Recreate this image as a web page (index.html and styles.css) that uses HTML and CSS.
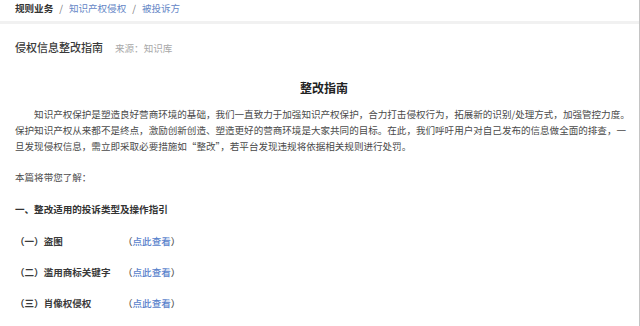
FILE: index.html
```html
<!DOCTYPE html>
<html lang="zh-CN">
<head>
<meta charset="utf-8">
<title>侵权信息整改指南</title>
<link rel="stylesheet" href="styles.css">
</head>
<body>
<div class="page">
  <nav class="crumbs">
    <span class="crumb-root">规则业务</span>
    <span class="crumb-sep">/</span>
    <a class="crumb-link">知识产权侵权</a>
    <span class="crumb-sep">/</span>
    <a class="crumb-link">被投诉方</a>
  </nav>
  <header class="doc-head">
    <h1 class="doc-title">侵权信息整改指南</h1>
    <span class="doc-source">来源：知识库</span>
  </header>
  <article class="article">
    <h2 class="article-title">整改指南</h2>
    <p class="intro">知识产权保护是塑造良好营商环境的基础，我们一直致力于加强知识产权保护，合力打击侵权行为，拓展新的识别/处理方式，加强管控力度。保护知识产权从来都不是终点，激励创新创造、塑造更好的营商环境是大家共同的目标。在此，我们呼吁用户对自己发布的信息做全面的排查，一旦发现侵权信息，需立即采取必要措施如“整改”，若平台发现违规将依据相关规则进行处罚。</p>
    <p class="lead">本篇将带您了解：</p>
    <h3 class="section-title">一、整改适用的投诉类型及操作指引</h3>
    <ul class="items">
      <li class="item"><span class="item-label">（一）盗图</span><span class="item-link">（<a>点此查看</a>）</span></li>
      <li class="item"><span class="item-label">（二）滥用商标关键字</span><span class="item-link">（<a>点此查看</a>）</span></li>
      <li class="item"><span class="item-label">（三）肖像权侵权</span><span class="item-link">（<a>点此查看</a>）</span></li>
    </ul>
  </article>
</div>
</body>
</html>
```
FILE: styles.css
```css
html, body {
  margin: 0;
  padding: 0;
  background: #ffffff;
}
body {
  font-family: "Noto Sans CJK SC", "Noto Sans", sans-serif;
  color: #4a4a4a;
  font-size: 9.55px;
}
.page {
  width: 639px;
  min-height: 326px;
  border-right: 1px solid #c4c4c4;
  box-sizing: content-box;
}
.crumbs {
  display: flex;
  align-items: flex-start;
  height: 21px;
  padding: 0 15px;
  line-height: 16px;
  border-bottom: 3px solid #f1f1f1;
  box-sizing: content-box;
}
.crumb-root {
  color: #333333;
  font-weight: 700;
}
.crumb-sep {
  color: #777777;
  margin: 0 6px;
}
.crumb-link {
  color: #6486c6;
}
.doc-head {
  display: flex;
  align-items: baseline;
  gap: 12px;
  padding: 15px 15px 0;
  line-height: 16px;
}
.doc-title {
  margin: 0;
  font-size: 11px;
  font-weight: 500;
  color: #3a3a3a;
}
.doc-source {
  color: #a8a8a8;
  font-size: 9.55px;
}
.article {
  width: 618px;
  padding: 0 0 0 15px;
}
.article-title {
  margin: 23px 0 0;
  text-align: center;
  font-size: 12px;
  line-height: 18px;
  font-weight: 700;
  color: #222222;
}
.intro {
  margin: 9px 0 0;
  line-height: 16px;
  text-indent: 2em;
  color: #4a4a4a;
}
.lead {
  margin: 15px 0 0;
  line-height: 16px;
  color: #4a4a4a;
}
.section-title {
  margin: 16px 0 0;
  font-size: 9.55px;
  line-height: 16px;
  font-weight: 700;
  color: #333333;
}
.items {
  list-style: none;
  margin: 16px 0 0;
  padding: 0;
  display: flex;
  flex-direction: column;
  gap: 15px;
}
.item {
  display: grid;
  grid-template-columns: 108px auto;
  line-height: 16px;
  font-weight: 700;
  color: #3a3a3a;
}
.item-link {
  color: #555555;
  font-weight: 500;
}
.item-link a {
  color: #5a83cc;
  font-weight: 500;
}
```
